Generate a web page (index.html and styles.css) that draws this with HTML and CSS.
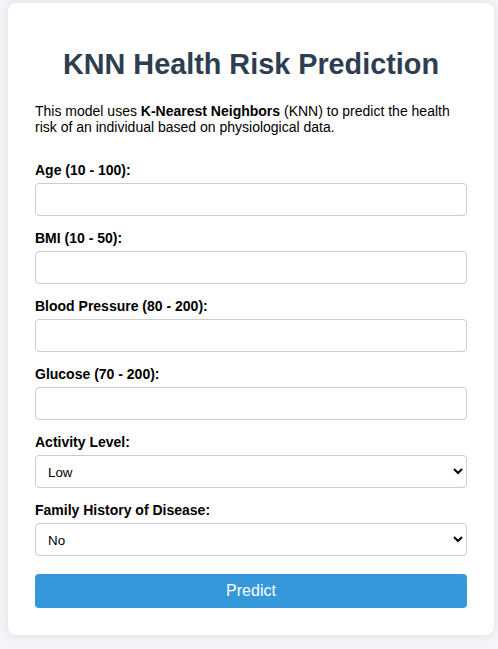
FILE: index.html
```html
<!DOCTYPE html>
<html lang="en">
<head>
<meta charset="utf-8">
<title>KNN Health Risk Prediction</title>
<link rel="stylesheet" href="styles.css">
</head>
<body>
<div class="card">
  <h1 class="title">KNN Health Risk Prediction</h1>
  <p class="intro">This model uses <strong>K-Nearest Neighbors</strong> (KNN) to predict the health risk of an individual based on physiological data.</p>
  <form class="form">
    <label class="label" for="age">Age (10 - 100):</label>
    <input class="field" id="age" type="number">
    <label class="label" for="bmi">BMI (10 - 50):</label>
    <input class="field" id="bmi" type="number">
    <label class="label" for="bp">Blood Pressure (80 - 200):</label>
    <input class="field" id="bp" type="number">
    <label class="label" for="glucose">Glucose (70 - 200):</label>
    <input class="field" id="glucose" type="number">
    <label class="label" for="activity">Activity Level:</label>
    <select class="field select" id="activity">
      <option>Low</option>
      <option>Medium</option>
      <option>High</option>
    </select>
    <label class="label" for="family">Family History of Disease:</label>
    <select class="field select" id="family">
      <option>No</option>
      <option>Yes</option>
    </select>
    <button class="btn" type="button">Predict</button>
  </form>
</div>
</body>
</html>
```

FILE: styles.css
```css
html, body {
  margin: 0;
  background: #f4f5f9;
}
body {
  padding: 3px 4px 15px 8px;
  font-family: "Liberation Sans", Arial, sans-serif;
  color: #000;
}
.card {
  background: #fff;
  border-radius: 8px;
  box-shadow: 0 0 10px rgba(0, 0, 0, 0.1);
  padding: 28px 27px 27px 27px;
}
.title {
  margin: 0;
  padding-top: 16px;
  text-align: center;
  font-size: 28.8px;
  font-weight: bold;
  color: #2c3e50;
  line-height: 34px;
}
.intro {
  margin: 22px 0 0 0;
  font-size: 14px;
  line-height: 16px;
}
.form {
  display: flex;
  flex-direction: column;
  margin-top: 27px;
}
.label {
  font-size: 14px;
  font-weight: bold;
  line-height: 16px;
  margin-bottom: 5px;
}
.field {
  box-sizing: border-box;
  height: 33px;
  width: 100%;
  padding: 8px;
  border: 1px solid #ccc;
  border-radius: 4px;
  font-family: "Liberation Sans", Arial, sans-serif;
  font-size: 13.33px;
  margin: 0 0 14px 0;
  background: #fff;
}
.btn {
  height: 34px;
  margin-top: 4px;
  background: #3498db;
  color: #fff;
  border: none;
  border-radius: 4px;
  font-family: "Liberation Sans", Arial, sans-serif;
  font-size: 16px;
}
```
